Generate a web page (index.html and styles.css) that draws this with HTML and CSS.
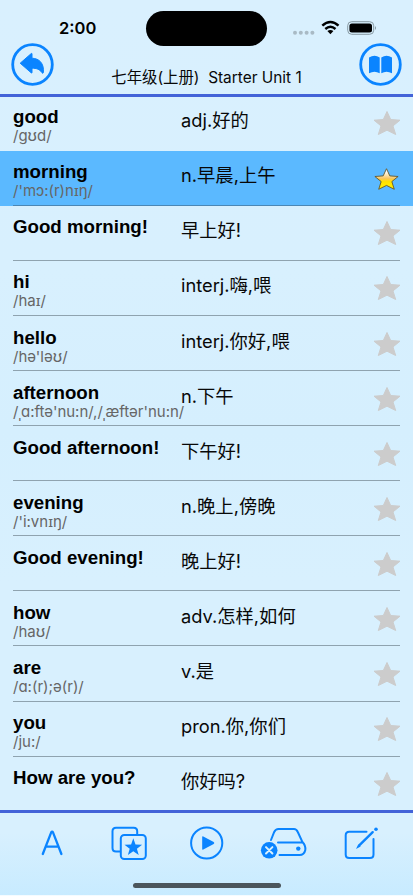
FILE: index.html
```html
<!DOCTYPE html>
<html lang="zh-CN">
<head>
    <meta charset="UTF-8">
    <meta name="viewport" content="width=device-width, initial-scale=1.0">
    <title>Starter Unit 1</title>
    <link rel="stylesheet" href="styles.css">
</head>
<body>
    <!-- shared star shapes -->
    <svg class="defs" width="0" height="0">
        <defs>
            <linearGradient id="gold" x1="0" y1="0" x2="0" y2="1">
                <stop offset="0.15" stop-color="#fff"/>
                <stop offset="0.48" stop-color="#f8c65c"/>
                <stop offset="0.62" stop-color="#ffe000"/>
                <stop offset="1" stop-color="#fff200"/>
            </linearGradient>
            <symbol id="star" viewBox="0 0 28 26">
                <path d="M14 1.5L17.7 9.5L27 10.2L20 15.9L22.7 24.5L14 20.2L5.3 24.5L8 15.9L1 10.2L10.3 9.5Z"/>
            </symbol>
        </defs>
    </svg>

    <div class="screen">
        <header class="header">
            <div class="status-bar">
                <span class="time">2:00</span>
                <span class="island"></span>
                <svg class="status-icons" width="86" height="18" viewBox="0 0 86 18">
                    <g fill="#a9bac5">
                        <circle cx="4" cy="13.8" r="2"/><circle cx="9.8" cy="13.8" r="2"/>
                        <circle cx="15.6" cy="13.8" r="2"/><circle cx="21.4" cy="13.8" r="2"/>
                    </g>
                    <g fill="none" stroke="#000" stroke-width="2.5">
                        <path d="M31.3 6.7Q39.4 -0.7 47.5 6.7"/>
                        <path d="M34.3 10Q39.4 5.6 44.5 10"/>
                    </g>
                    <path d="M36.4 11.9Q39.4 9.9 42.4 11.9L39.4 15.2Z"/>
                    <rect x="56.7" y="2.7" width="26" height="12.6" rx="4" fill="none" stroke="#8799a2"/>
                    <rect x="58.4" y="4.4" width="22.6" height="9.2" rx="2.5"/>
                    <path d="M84 7Q86 9 84 11Z" fill="#8799a2"/>
                </svg>
            </div>
            <div class="nav-bar">
                <button class="round-button" aria-label="Back">
                    <svg width="43" height="43" viewBox="0 0 43 43">
                        <circle cx="21.5" cy="21.5" r="19.8" fill="none" stroke="#0a84ff" stroke-width="2.8"/>
                        <path d="M9.2 20.2L20.3 10.5Q21 10 21 11V15.2C28.5 15.5 33.2 20.5 32.4 29.5Q32 31 31 29.7C28.5 26 25.5 25.3 21 25.2V29.4Q21 30.5 20.2 29.8Z" fill="#0a84ff" stroke="#0a84ff" stroke-linejoin="round"/>
                    </svg>
                </button>
                <h1 class="title">七年级(上册)&nbsp; Starter Unit 1</h1>
                <button class="round-button" aria-label="Book">
                    <svg width="43" height="43" viewBox="0 0 43 43">
                        <circle cx="21.5" cy="21.5" r="19.8" fill="none" stroke="#0a84ff" stroke-width="2.8"/>
                        <path d="M10 14.5Q15.5 10.8 20.7 14.5V30.2Q15.5 27.2 10 30.2ZM22.3 14.5Q27.5 10.8 33 14.5V30.2Q27.5 27.2 22.3 30.2Z" fill="#0a84ff"/>
                    </svg>
                </button>
            </div>
        </header>

        <main class="list">
            <div class="row">
                <div class="entry"><b class="word">good</b><span class="phonetic">/gʊd/</span></div>
                <span class="meaning">adj.好的</span>
                <svg class="star"><use href="#star"/></svg>
            </div>
            <div class="row active">
                <div class="entry"><b class="word">morning</b><span class="phonetic">/'mɔ:(r)nɪŋ/</span></div>
                <span class="meaning">n.早晨,上午</span>
                <svg class="star"><use href="#star"/></svg>
            </div>
            <div class="row">
                <div class="entry"><b class="word">Good morning!</b></div>
                <span class="meaning">早上好!</span>
                <svg class="star"><use href="#star"/></svg>
            </div>
            <div class="row">
                <div class="entry"><b class="word">hi</b><span class="phonetic">/haɪ/</span></div>
                <span class="meaning">interj.嗨,喂</span>
                <svg class="star"><use href="#star"/></svg>
            </div>
            <div class="row">
                <div class="entry"><b class="word">hello</b><span class="phonetic">/hə'ləʊ/</span></div>
                <span class="meaning">interj.你好,喂</span>
                <svg class="star"><use href="#star"/></svg>
            </div>
            <div class="row">
                <div class="entry"><b class="word">afternoon</b><span class="phonetic">/ˌɑ:ftə'nu:n/,/ˌæftər'nu:n/</span></div>
                <span class="meaning">n.下午</span>
                <svg class="star"><use href="#star"/></svg>
            </div>
            <div class="row">
                <div class="entry"><b class="word">Good afternoon!</b></div>
                <span class="meaning">下午好!</span>
                <svg class="star"><use href="#star"/></svg>
            </div>
            <div class="row">
                <div class="entry"><b class="word">evening</b><span class="phonetic">/'i:vnɪŋ/</span></div>
                <span class="meaning">n.晚上,傍晚</span>
                <svg class="star"><use href="#star"/></svg>
            </div>
            <div class="row">
                <div class="entry"><b class="word">Good evening!</b></div>
                <span class="meaning">晚上好!</span>
                <svg class="star"><use href="#star"/></svg>
            </div>
            <div class="row">
                <div class="entry"><b class="word">how</b><span class="phonetic">/haʊ/</span></div>
                <span class="meaning">adv.怎样,如何</span>
                <svg class="star"><use href="#star"/></svg>
            </div>
            <div class="row">
                <div class="entry"><b class="word">are</b><span class="phonetic">/ɑ:(r);ə(r)/</span></div>
                <span class="meaning">v.是</span>
                <svg class="star"><use href="#star"/></svg>
            </div>
            <div class="row">
                <div class="entry"><b class="word">you</b><span class="phonetic">/ju:/</span></div>
                <span class="meaning">pron.你,你们</span>
                <svg class="star"><use href="#star"/></svg>
            </div>
            <div class="row">
                <div class="entry"><b class="word">How are you?</b></div>
                <span class="meaning">你好吗?</span>
                <svg class="star"><use href="#star"/></svg>
            </div>
        </main>

        <footer class="toolbar">
            <div class="tools">
                <button class="tool" aria-label="Font">
                    <svg width="48" height="36" viewBox="0 0 48 36">
                        <path d="M14.8 29L23.2 7.4Q24.1 5.8 25 7.4L33.4 29M18 21.7H30.3" stroke-width="2.3"/>
                    </svg>
                </button>
                <button class="tool" aria-label="Favourites">
                    <svg width="48" height="36" viewBox="0 0 48 36">
                        <path d="M15 26.5H11Q7.5 26.5 7.5 23V6.3Q7.5 2.8 11 2.8H28.7Q32.2 2.8 32.2 6.3V10"/>
                        <rect x="15.8" y="10" width="25" height="24" rx="3.5"/>
                        <path class="solid" d="M28.3 13.3L30.5 19.5L37.1 19.7L31.9 23.7L33.7 30L28.3 26.3L22.9 30L24.7 23.7L19.5 19.7L26.1 19.5Z"/>
                    </svg>
                </button>
                <button class="tool" aria-label="Play">
                    <svg width="48" height="36" viewBox="0 0 48 36">
                        <circle cx="23.7" cy="18" r="15.6"/>
                        <path class="solid" d="M19.2 12Q19.2 10.8 20.3 11.4L30.7 17.1Q31.9 18 30.7 18.9L20.3 24.6Q19.2 25.2 19.2 24Z"/>
                    </svg>
                </button>
                <button class="tool" aria-label="Clear">
                    <svg width="48" height="36" viewBox="0 0 48 36">
                        <path d="M11 15L14.2 7Q15.6 4 18.5 4H34Q36.5 4 37.8 7L42.6 17.3Q45.8 20.5 45.3 25Q44.2 30 39.5 30H19.5M18 17.6H42"/>
                        <circle class="solid" cx="38.3" cy="23.6" r="2.2"/>
                        <circle class="solid" cx="9.2" cy="25.3" r="8.3"/>
                        <path class="cross" d="M6 22.1L12.4 28.5M12.4 22.1L6 28.5"/>
                    </svg>
                </button>
                <button class="tool" aria-label="Edit">
                    <svg width="48" height="36" viewBox="0 0 48 36">
                        <path d="M28.5 6.8H11.2Q7.700 6.800 7.700 10.300V29.500Q7.700 33 11.200 33H32Q35.500 33 35.500 29.500V14"/>
                        <path d="M21.5 20.2L34.7 7.2" stroke-width="2.4"/>
                        <path class="solid" d="M18 24L20.3 19.2L22.7 21.6Z"/>
                        <circle class="solid" cx="38" cy="4.3" r="1.8"/>
                    </svg>
                </button>
            </div>
            <div class="home-indicator"></div>
        </footer>
    </div>
</body>
</html>
```

FILE: styles.css
```css
* {
    box-sizing: border-box;
}

body {
    margin: 0;
    font-family: Inter, "Noto Sans CJK SC", sans-serif;
    color: #080808;
}

button {
    padding: 0;
    border: none;
    background: none;
}

svg {
    display: block;
}

.defs {
    position: absolute;
}

.screen {
    width: 413px;
    height: 896px;
    display: flex;
    flex-direction: column;
    overflow: hidden;
    background: linear-gradient(#d9f0fe, #d8f0fe 30%, #d5effe 48%, #d8f0fe 65%, #d8f0fe 93%, #c8ebff);
    border-bottom: 1px solid #f4fbff;
}

.header {
    flex: none;
    height: 97px;
    border-bottom: 3px solid #4363d8;
}

.status-bar {
    display: grid;
    grid-template-columns: 146px 121px 1fr;
    height: 43px;
    padding-top: 11px;
}

.time {
    padding: 6px 0 0 59px;
    font-size: 16.5px;
    font-weight: 600;
    line-height: 23px;
    color: #000;
}

.island {
    height: 35px;
    border-radius: 18px;
    background: #000;
}

.status-icons {
    margin: 8px 0 0 24px;
}

.nav-bar {
    display: flex;
    justify-content: space-between;
    padding: 0 11px;
}

.round-button {
    width: 43px;
    height: 43px;
}

.title {
    margin: 23px 0 0;
    font-size: 15.4px;
    font-weight: 400;
    line-height: 23px;
    white-space: nowrap;
}

.list {
    flex: none;
    height: 713px;
    overflow: hidden;
}

.row {
    display: grid;
    grid-template-columns: 168px 1fr 28px;
    height: 55.12px;
    padding: 0 12px 0 13px;
    background: linear-gradient(#8fa3af, #8fa3af) 13px 100% / 387px 1px no-repeat;
}

.row:first-child {
    height: 53.5px;
    background: none;
}

.row:first-child > * {
    margin-top: -1.6px;
}

.active {
    background-color: #5bb9ff;
    background-image: linear-gradient(#4b87b5, #4b87b5);
}

.entry {
    display: flex;
    flex-direction: column;
    padding-top: 10.7px;
    white-space: nowrap;
}

.word {
    font-family: "Liberation Sans", Arial, sans-serif;
    font-size: 18.7px;
    line-height: 22px;
    color: #000;
}

.phonetic {
    font-family: Inter, "Noto Sans", sans-serif;
    font-size: 15px;
    line-height: 16px;
    color: #666;
}

.meaning {
    padding-top: 12.7px;
    font-size: 18.3px;
    line-height: 24px;
}

.star {
    width: 28px;
    height: 26px;
    margin-top: 14.7px;
    fill: #ccc;
    stroke: #ccc;
    stroke-linejoin: round;
}

.row:first-child .star {
    margin-top: 13px;
}

.active .star {
    width: 25px;
    height: 24px;
    margin: 16.7px 2px 0 1px;
    fill: url(#gold);
    stroke: #665525;
}

.toolbar {
    flex: none;
    height: 85px;
    border-top: 3px solid #4363d8;
}

.tools {
    display: flex;
    justify-content: space-between;
    padding: 12px 27.5px 0;
}

.tool {
    width: 48px;
    height: 36px;
}

.tool svg {
    fill: none;
    stroke: #0a84ff;
    stroke-width: 2;
    stroke-linecap: round;
}

.tool .solid {
    fill: #0a84ff;
    stroke: none;
}

.tool .cross {
    stroke: #d8f0fe;
}

.home-indicator {
    width: 148px;
    height: 5px;
    margin: 22px auto 0;
    border-radius: 3px;
    background: #4b565c;
}
```
